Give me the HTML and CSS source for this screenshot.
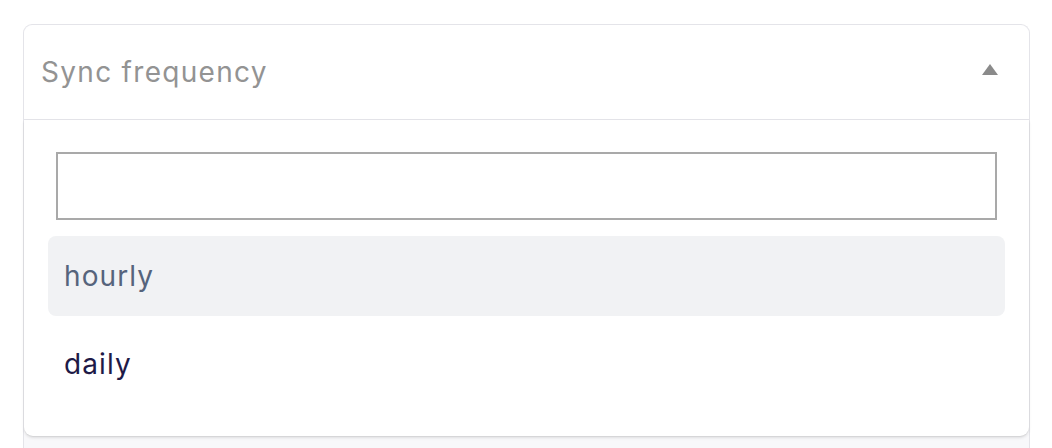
FILE: index.html
```html
<!DOCTYPE html>
<html>
<head>
<meta charset="utf-8">
<link rel="stylesheet" href="styles.css">
</head>
<body>
<div class="select">
  <div class="select-head">
    <span class="placeholder">Sync frequency</span>
    <svg class="caret" width="16" height="11" viewBox="0 0 16 11"><path d="M8 0 L16 11 L0 11 Z" fill="#8a8a8a"/></svg>
  </div>
  <div class="select-body">
    <div class="panel">
      <input class="search" type="text">
      <ul class="options">
        <li class="option active">hourly</li>
        <li class="option">daily</li>
      </ul>
    </div>
  </div>
</div>
</body>
</html>
```
FILE: styles.css
```css
html, body {
  margin: 0;
  padding: 0;
  background: #ffffff;
  font-family: Inter, "Liberation Sans", sans-serif;
  overflow: hidden;
}
body {
  padding: 24px 22px 0 23px;
  height: 448px;
  box-sizing: border-box;
}
.select {
  border: 1px solid #e4e4e9;
  border-bottom: none;
  border-radius: 9px 9px 0 0;
  height: 430px;
  display: flex;
  flex-direction: column;
  background: #f8f8fa;
}
.select-head {
  height: 94px;
  background: #fff;
  border-radius: 9px 9px 0 0;
  border-bottom: 1px solid #e4e4e9;
  display: flex;
  align-items: center;
  justify-content: space-between;
  padding: 0 31px 0 17px;
}
.placeholder {
  font-size: 28px;
  color: #939393;
  letter-spacing: 1.3px;
  margin-top: 0;
}
.caret {
  margin-top: -6px;
}
.select-body {
  flex: 1;
}
.panel {
  background: #fff;
  border-radius: 0 0 9px 9px;
  box-shadow: 0 2px 3px rgba(0,0,0,0.10), 0 1px 1px rgba(0,0,0,0.06);
  padding: 32px 24px 32px 24px;
  display: flex;
  flex-direction: column;
}
.search {
  display: block;
  margin: 0 8px;
  height: 68px;
  box-sizing: border-box;
  border: 2px solid #a9a9a9;
  border-radius: 0;
  outline: none;
  font-size: 28px;
}
.options {
  list-style: none;
  margin: 16px 0 0 0;
  padding: 0;
  display: flex;
  flex-direction: column;
  gap: 8px;
}
.option {
  height: 80px;
  display: flex;
  align-items: center;
  padding-left: 16px;
  font-size: 28px;
  letter-spacing: 1.1px;
  color: #1e1a47;
  border-radius: 8px;
}
.option.active {
  background: #f1f2f4;
  color: #56647c;
}
```
